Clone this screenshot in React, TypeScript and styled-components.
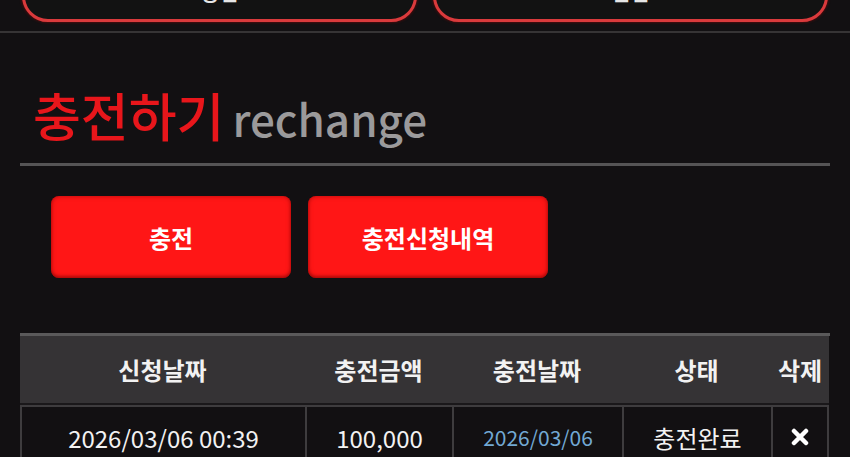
import React from 'react';
import styled, { createGlobalStyle } from 'styled-components';

const GlobalStyle = createGlobalStyle`
  html, body {
    margin: 0;
    padding: 0;
    background: #121012;
    overflow: hidden;
  }
  body {
    font-family: "Noto Sans CJK KR", "Noto Sans", sans-serif;
    color: #fff;
  }
`;

const Page = styled.div`
  width: 850px;
  height: 457px;
  overflow: hidden;
`;

const TopNav = styled.nav`
  display: grid;
  grid-template-columns: 1fr 1fr;
  gap: 16px;
  padding: 0 22px 9px;
  margin-top: -30px;
  border-bottom: 2px solid #363435;
`;

const NavButton = styled.button`
  height: 52px;
  border: 3px solid #d93a3c;
  border-radius: 26px;
  background: #121212;
  color: #e6e6e6;
  font-family: inherit;
  font-size: 20px;
  font-weight: 700;
  line-height: 1;
  padding: 0 0 6px;
  box-shadow: 0 0 3px rgba(200, 0, 0, 0.6);
`;

const Section = styled.section`
  padding: 0 20px;
`;

const TitleRow = styled.h2`
  margin: 0;
  padding: 56px 0 22px 13px;
  border-bottom: 3px solid #555455;
  line-height: 1;
  font-weight: 500;
  display: flex;
  align-items: baseline;
  gap: 8px;
`;

const TitleKo = styled.span`
  color: #e8161b;
  font-size: 52px;
`;

const TitleEn = styled.span`
  color: #9b9a9b;
  font-size: 44px;
`;

const ActionRow = styled.div`
  display: flex;
  gap: 17px;
  padding: 30px 0 0 31px;
`;

const ActionButton = styled.button`
  width: 240px;
  height: 82px;
  border: none;
  border-radius: 8px;
  background: #ff1616;
  color: #fff;
  font-family: inherit;
  font-size: 24px;
  font-weight: 700;
  box-shadow: inset 0 0 5px rgba(120, 0, 0, 0.55), inset 0 -2px 3px rgba(110, 0, 0, 0.4);
`;

const Table = styled.div`
  margin-top: 55px;
  border-top: 3px solid #5a595a;
  display: grid;
  grid-template-columns: 285px 147px 170px 149px 58px;
`;

const HeadCell = styled.div`
  height: 67px;
  background: #353335;
  display: flex;
  align-items: center;
  justify-content: center;
  font-size: 24px;
  font-weight: 700;
  color: #f2f2f2;
  border-bottom: 2px solid #1a181a;
`;

const Cell = styled.div<{ $tone?: 'date' }>`
  height: 60px;
  display: flex;
  align-items: center;
  justify-content: center;
  border: 2px solid #3e3c3e;
  border-right: none;
  border-bottom: none;
  background: #121012;
  font-size: ${(p) => (p.$tone === 'date' ? '21px' : '24px')};
  color: ${(p) => (p.$tone === 'date' ? '#72a9d4' : '#f2f2f2')};
  &:last-child {
    border-right: 2px solid #3e3c3e;
  }
`;

const columns = ['신청날짜', '충전금액', '충전날짜', '상태', '삭제'];

const App: React.FC = () => {
  return (
    <Page>
      <GlobalStyle />
      <TopNav>
        <NavButton>충전</NavButton>
        <NavButton>환전</NavButton>
      </TopNav>
      <Section>
        <TitleRow>
          <TitleKo>충전하기</TitleKo>
          <TitleEn>rechange</TitleEn>
        </TitleRow>
        <ActionRow>
          <ActionButton>충전</ActionButton>
          <ActionButton>충전신청내역</ActionButton>
        </ActionRow>
        <Table>
          {columns.map((c) => (
            <HeadCell key={c}>{c}</HeadCell>
          ))}
          <Cell>2026/03/06 00:39</Cell>
          <Cell>100,000</Cell>
          <Cell $tone="date">2026/03/06</Cell>
          <Cell>충전완료</Cell>
          <Cell>
            <svg width="18" height="18" viewBox="0 0 18 18">
              <path d="M3 3 L15 15 M15 3 L3 15" stroke="#fff" strokeWidth="4.5" strokeLinecap="round" />
            </svg>
          </Cell>
        </Table>
      </Section>
    </Page>
  );
};

export default App;
